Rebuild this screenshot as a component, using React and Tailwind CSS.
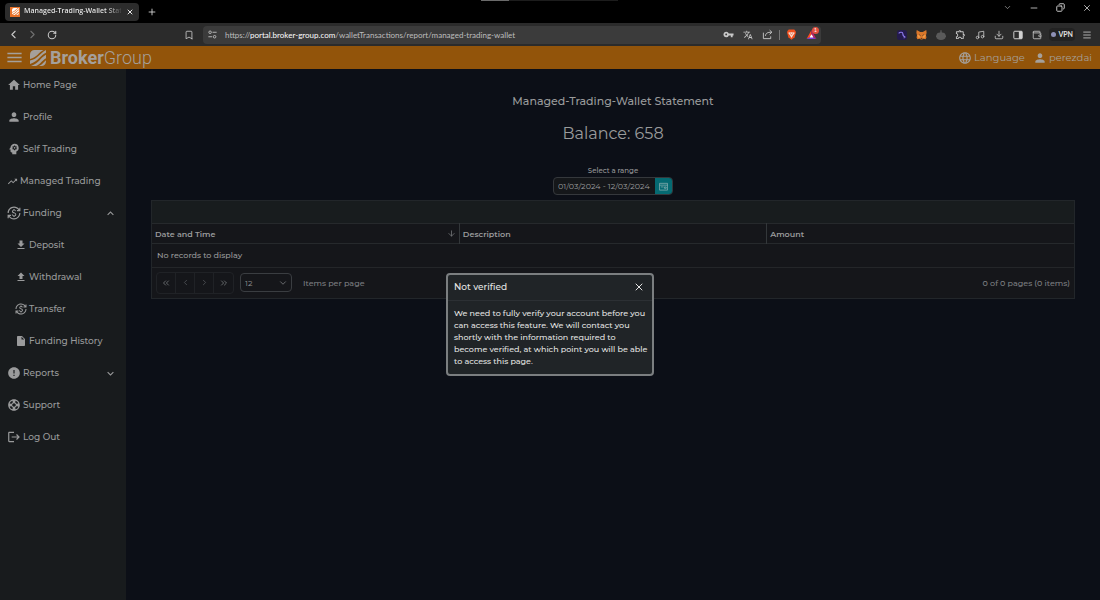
import { useState } from "react";
import {
  MdHome, MdPerson, MdPsychology, MdTrendingUp, MdCurrencyExchange, MdDownload, MdUpload,
  MdInsertDriveFile, MdError, MdSupport, MdLogout, MdExpandLess, MdExpandMore, MdLanguage,
  MdMenu, MdVpnKey, MdTranslate, MdOutlineExtension,
} from "react-icons/md";
import {
  X, Plus, ChevronLeft, ChevronRight, ChevronDown, RotateCw, Bookmark, Minus, Copy,
  Music, Download, Wallet, Menu, ArrowDown, ChevronsLeft, ChevronsRight,
} from "lucide-react";

const nav = [
  { label: "Home Page", Icon: MdHome, size: 14 },
  { label: "Profile", Icon: MdPerson, size: 14 },
  { label: "Self Trading", Icon: MdPsychology, size: 14 },
  { label: "Managed Trading", Icon: MdTrendingUp, size: 11, tight: true },
  { label: "Funding", Icon: MdCurrencyExchange, size: 14, Arrow: MdExpandLess },
  { label: "Deposit", Icon: MdDownload, size: 12, child: true },
  { label: "Withdrawal", Icon: MdUpload, size: 12, child: true },
  { label: "Transfer", Icon: MdCurrencyExchange, size: 12, child: true },
  { label: "Funding History", Icon: MdInsertDriveFile, size: 12, child: true },
  { label: "Reports", Icon: MdError, size: 14, Arrow: MdExpandMore },
  { label: "Support", Icon: MdSupport, size: 14 },
  { label: "Log Out", Icon: MdLogout, size: 14 },
];

function LogoMark({ className }) {
  return (
    <svg viewBox="0 0 16 16" className={className} fill="currentColor" aria-hidden="true">
      <path d="M4.5 0H13.500C9 2 7 7.500 0 9V4.500A4.500 4.500 0 0 1 4.500 0Z" />
      <path d="M16 0v2.800C10.500 5 9 11 0 14v-3.400C8 9 10 3 16 0Z" />
      <path d="M16 4.800V8.200C12.500 10 10.500 14 6 16H1C9 13.500 10.500 7.500 16 4.800Z" />
      <path d="M16 10.200v1.300A4.500 4.500 0 0 1 11.500 16H9C12.500 14.500 13.500 12 16 10.200Z" />
    </svg>
  );
}

function SiteInfoIcon() {
  return (
    <svg viewBox="0 0 12 12" className="size-[9px]" fill="none" stroke="#b8b8b8" strokeWidth="1.300" aria-hidden="true">
      <circle cx="2.800" cy="3" r="1.700" />
      <path d="M6 3h5.500M.5 9h5" />
      <circle cx="8.800" cy="9" r="1.700" />
    </svg>
  );
}

function ShareIcon() {
  return (
    <svg viewBox="0 0 12 12" className="size-[11px]" fill="none" stroke="currentColor" strokeWidth="1" aria-hidden="true">
      <path d="M1.500 4v6.500h8V8M3.800 7.500c.2-2.800 2-4 6.700-4M8.300 1.200l2.500 2.300-2.500 2.300" />
    </svg>
  );
}

function BraveIcon() {
  return (
    <svg viewBox="0 0 12 12" className="size-[11px]" aria-hidden="true">
      <path d="M3 .6h6l1.400 1.600.5 1.700-1.500 5L6 11.700 2.600 8.900l-1.500-5 .5-1.700Z" fill="#f0501e" />
      <path d="M3 3.500l1.700.4L6 3.600l1.300.3L9 3.500l.4 1.200-1.700 2L6 9.700l-1.700-3-1.700-2Z" fill="#f4e4de" />
      <path d="M4.200 4.800l1.200.5L6 6.800l.6-1.500 1.200-.5" stroke="#f0501e" strokeWidth=".6" fill="none" />
    </svg>
  );
}

function RewardsIcon() {
  return (
    <span className="relative block">
      <svg viewBox="0 0 12 12" className="size-[11px]" aria-hidden="true">
        <path d="M6 1 .6 11 6 7.800Z" fill="#ff4a21" />
        <path d="M.6 11h10.800L6 7.800Z" fill="#7b3fd0" />
        <path d="M6 1v6.800L11.400 11Z" fill="#b8206a" />
        <path d="M6 5.600 3.900 9.200h4.200Z" fill="#fff" />
      </svg>
      <span className="absolute -top-[2px] left-[6px] flex size-[7px] items-center justify-center rounded-full bg-[#e2503f] text-[5px] leading-none text-white">1</span>
    </span>
  );
}

function FoxIcon() {
  return (
    <svg viewBox="0 0 12 12" className="size-[11px]" aria-hidden="true">
      <path d="M.8 1 4.600 3.200h2.800L11.200 1l.4 3.200-.7 2.700.5 2.300-.9 2-2.700-.7-1 .9H5.200l-1-.9-2.700.7-.9-2 .5-2.300L.4 4.200Z" fill="#d9772a" />
      <path d="M1.200 6.800 4 6.500l.9 2.700-2 .5ZM10.800 6.800 8 6.500l-.9 2.700 2 .5Z" fill="#f39a45" />
      <path d="M3.600 6.300l1.300.9M8.400 6.300l-1.300.9M5.200 10.300h1.600" stroke="#2b2320" strokeWidth=".8" />
    </svg>
  );
}

function BrowserBar() {
  return (
    <div className="font-['Lato','Open_Sans',sans-serif] text-[#c8c8c8]">
      <div className="relative flex h-[23px] items-center justify-between bg-black">
        <div className="absolute left-[481px] top-0 flex h-px w-[137px] bg-[#1c1c1c]">
          <span className="w-7 bg-[#6a6a6a]" />
        </div>
        <div className="flex items-center pl-[5px]">
          <div className="flex h-[18px] w-[134px] items-center rounded bg-[#2c2c2c] px-[5px]">
            <span className="flex size-[10px] shrink-0 items-center justify-center bg-[#e9732a] text-white">
              <LogoMark className="size-[7px]" />
            </span>
            <span className="ml-1 w-[98px] overflow-hidden whitespace-nowrap bg-gradient-to-r from-[#f2f2f2] from-85% to-[#444] bg-clip-text font-['Open_Sans',sans-serif] text-[7px] font-semibold text-transparent">
              Managed-Trading-Wallet Statement
            </span>
            <button aria-label="Close tab" className="ml-[5px] text-[#e8e8e8]"><X size={8} strokeWidth={3} /></button>
          </div>
          <button aria-label="New tab" className="ml-2 text-[#e0e0e0]"><Plus size={10} /></button>
        </div>
        <div className="mb-2 flex items-center gap-[17px] pr-2 text-[#d0d0d0]">
          <button aria-label="Search tabs"><ChevronDown size={9} strokeWidth={1.500} /></button>
          <button aria-label="Minimize"><Minus size={10} /></button>
          <button aria-label="Restore"><Copy size={9} strokeWidth={2.500} className="-scale-x-100" /></button>
          <button aria-label="Close window"><X size={10} /></button>
        </div>
      </div>
      <div className="flex h-[23px] items-center bg-[#2b2b2b]">
        <div className="flex w-[203px] items-center pl-[7px]">
          <button aria-label="Back"><ChevronLeft size={13} /></button>
          <button aria-label="Forward" className="ml-[6px] text-[#707070]"><ChevronRight size={13} /></button>
          <button aria-label="Reload" className="ml-2"><RotateCw size={10} strokeWidth={2.500} /></button>
          <button aria-label="Bookmark" className="ml-auto mr-[9px]"><Bookmark size={10} strokeWidth={2} /></button>
        </div>
        <div className="flex h-[18px] w-[618px] items-center rounded bg-[#3b3b3b] px-1">
          <span className="ml-px"><SiteInfoIcon /></span>
          <span className="ml-2 text-[8px] text-[#bdbdbd]">
            https://<span className="text-white">portal.broker-group.com</span>/walletTransactions/report/managed-trading-wallet
          </span>
          <div className="ml-auto flex items-center gap-[9px]">
            <MdVpnKey size={11} />
            <MdTranslate size={10} />
            <ShareIcon />
            <span className="-mx-[3px] h-[10px] w-px bg-[#777]" />
            <BraveIcon />
            <RewardsIcon />
          </div>
        </div>
        <div className="ml-auto flex items-center gap-[9px] pr-2">
          <svg viewBox="0 0 12 12" className="size-[10px]" aria-hidden="true">
            <rect width="12" height="12" rx="3" fill="#241b4d" />
            <path d="M2 4c2-2 5-1.500 5 .5S8 8 10 8.500M8 9.500l2-1" stroke="#8f7cf0" strokeWidth="1.300" fill="none" />
          </svg>
          <FoxIcon />
          <svg viewBox="0 0 12 12" className="size-[10px]" fill="#5a5a5a" aria-hidden="true">
            <path d="M5.500 0h1l.5 3c3 0 4.500 1.500 4.500 3.500h.5v2h-.5C11.500 10.500 9.500 12 6 12S.5 10.500.5 8.500H0v-2h.5C.5 4.500 2 3 5 3Z" />
          </svg>
          <MdOutlineExtension size={11} />
          <Music size={10} />
          <Download size={10} />
          <svg viewBox="0 0 12 12" className="size-[10px]" aria-hidden="true">
            <rect x="1" y="1.500" width="10" height="9" rx="1" stroke="#d0d0d0" strokeWidth="1.200" fill="none" />
            <path d="M7 1.500h4v9H7Z" fill="#d0d0d0" />
          </svg>
          <Wallet size={10} />
          <span className="-mx-[2px] flex items-center gap-[2px] rounded bg-[#222] px-[2px] py-px text-[7px] font-bold text-[#e0e0e0]">
            <span className="size-[5px] rounded-full bg-[#8d90b5]" />VPN
          </span>
          <button aria-label="Browser menu"><Menu size={10} /></button>
        </div>
      </div>
    </div>
  );
}

function Pager() {
  return (
    <div className="flex h-[31px] items-center border-t border-[#242629] px-1">
      <div className="flex h-[22px] divide-x divide-[#202226] rounded-sm border border-[#202226] text-[#55585c]">
        <button aria-label="First page" className="flex w-[19px] items-center justify-center"><ChevronsLeft size={10} className="text-[#74777a]" /></button>
        <button aria-label="Previous page" className="flex w-[19px] items-center justify-center"><ChevronLeft size={9} /></button>
        <button aria-label="Next page" className="flex w-[19px] items-center justify-center"><ChevronRight size={9} /></button>
        <button aria-label="Last page" className="flex w-[19px] items-center justify-center"><ChevronsRight size={10} className="text-[#74777a]" /></button>
      </div>
      <div className="relative ml-[6px]">
        <select id="page-size" defaultValue="12" className="block h-[19px] w-[52px] appearance-none rounded-sm border border-[#3a3d41] bg-transparent pl-1 text-[8px] text-[#8f9193]">
          <option>12</option>
          <option>24</option>
        </select>
        <ChevronDown size={10} className="pointer-events-none absolute right-1 top-[5px] text-[#77797c]" />
      </div>
      <label htmlFor="page-size" className="ml-[11px] text-[8px] font-medium text-[#7d7f82]">Items per page</label>
      <span className="ml-auto text-[8px] font-medium text-[#7d7f82]">0 of 0 pages (0 items)</span>
    </div>
  );
}

export default function App() {
  const [open, setOpen] = useState(true);
  const [range, setRange] = useState("01/03/2024 - 12/03/2024");
  return (
    <div className="flex min-h-screen flex-col bg-[#0c0f17] font-['Montserrat','Inter',sans-serif] text-[#9a9b9c]">
      <BrowserBar />
      <div className="relative flex flex-1 flex-col">
        <header className="flex h-[23px] items-center bg-[#92540a] px-2 text-[#a5a09b]">
          <button aria-label="Toggle menu" className="-ml-[3px]"><MdMenu size={19} /></button>
          <a href="#home" className="ml-[6px] flex items-center gap-1">
            <LogoMark className="size-4" />
            <span className="font-['Roboto',sans-serif] text-[18px] leading-none"><b>Broker</b><span className="font-light">Group</span></span>
          </a>
          <div className="ml-auto flex items-center gap-2 text-[10px]">
            <button className="flex items-center gap-[2px]"><MdLanguage size={14} />Language</button>
            <button className="flex items-center gap-[2px]"><MdPerson size={14} />perezdai</button>
          </div>
        </header>
        <div className="flex flex-1">
          <nav className="w-[126px] shrink-0 bg-[#181b1d]">
            {nav.map(({ label, Icon, size, child, tight, Arrow }) => (
              <a key={label} href="#page" className={`flex h-8 items-center pr-[9px] text-[9px] font-medium ${child ? "pl-[15px]" : "pl-[7px]"}`}>
                <span className={`flex shrink-0 justify-center ${child ? "w-3" : tight ? "w-[11px]" : "w-[14px]"}`}><Icon size={size} /></span>
                <span className="ml-[2px] whitespace-nowrap">{label}</span>
                {Arrow && <Arrow size={13} className="ml-auto" />}
              </a>
            ))}
          </nav>
          <main className="flex min-w-0 flex-1 flex-col items-center px-[25px] pt-6">
            <h1 className="text-[11px] font-medium leading-4">Managed-Trading-Wallet Statement</h1>
            <h2 className="mt-[15px] text-base leading-5">Balance: 658</h2>
            <label htmlFor="range" className="mt-[21px] text-[7px] font-medium leading-3">Select a range</label>
            <div className="flex h-[18px] overflow-hidden rounded-sm border border-[#35383c] bg-[#15171a]">
              <input id="range" value={range} onChange={(e) => setRange(e.target.value)} className="w-[101px] bg-transparent pl-1 text-[8px] outline-none" />
              <button aria-label="Open calendar" className="flex w-[17px] items-center justify-center bg-[#056a72] text-[#8fb2b4]">
                <svg viewBox="0 0 10 10" className="size-[9px]" fill="none" stroke="currentColor" aria-hidden="true">
                  <path d="M.5 1.500h9v7.500h-9ZM.5 3.500h9M2 5.500h3M6 5.500h2v1.500H6Z" strokeWidth=".8" />
                </svg>
              </button>
            </div>
            <section className="mt-[5px] w-full border border-[#22262a] bg-[#15161a]">
              <div className="h-[22px] bg-[#181c1e]" />
              <table className="w-full table-fixed border-collapse text-left text-[8px]">
                <thead>
                  <tr className="h-5 border-y border-[#26292c]">
                    <th className="px-[3px] py-0 font-semibold">
                      <div className="flex items-center justify-between">Date and Time<ArrowDown size={9} className="text-[#77797c]" /></div>
                    </th>
                    <th className="border-l border-[#33373a] px-[3px] py-0 font-semibold">Description</th>
                    <th className="border-l border-[#33373a] px-[3px] py-0 font-semibold">Amount</th>
                  </tr>
                </thead>
                <tbody>
                  <tr className="h-[23px]"><td colSpan={3} className="px-[5px] py-0 font-medium">No records to display</td></tr>
                </tbody>
              </table>
              <Pager />
            </section>
          </main>
        </div>
        {open && (
          <div className="absolute inset-0 flex items-center justify-center pt-0.5">
            <div role="dialog" aria-labelledby="dialog-title" className="w-[208px] rounded border-2 border-[#7b7e80] bg-[#202427] text-[#e4e4e4]">
              <div className="flex h-[26px] items-center justify-between border-b border-[#2c3034] pl-[6px] pr-[7px]">
                <h3 id="dialog-title" className="text-[9px] font-medium">Not verified</h3>
                <button aria-label="Close" onClick={() => setOpen(false)}><X size={12} strokeWidth={2} /></button>
              </div>
              <p className="pb-[7px] pl-[6px] pr-1 pt-[6px] text-[8px] font-medium leading-3">
                We need to fully verify your account before you can access this feature. We will contact you shortly with the information required to become verified, at which point you will be able to access this page.
              </p>
            </div>
          </div>
        )}
      </div>
    </div>
  );
}
